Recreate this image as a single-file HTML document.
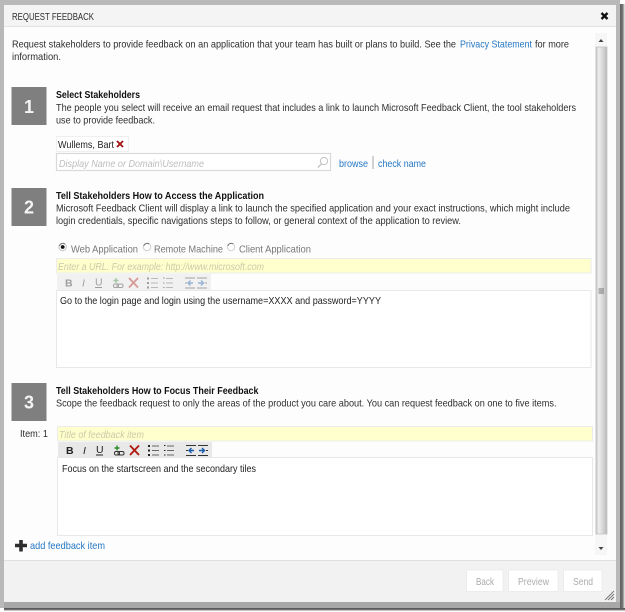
<!DOCTYPE html>
<html><head><meta charset="utf-8"><title>Request Feedback</title>
<style>
html,body{margin:0;padding:0;background:#fff;width:625px;height:612px;overflow:hidden}
svg{display:block;filter:blur(.35px)}
text{font-family:"Liberation Sans",sans-serif;font-size:10.5px;fill:#2e2e2e}
.h{font-weight:bold;fill:#111}
.l{fill:#2477c4}
.g{fill:#777}
.p{font-style:italic;fill:#bdbdbd}
.y{font-style:italic;fill:#cacaa8}
.n{font-size:18px;font-weight:bold;fill:#f4f4f4;text-anchor:middle}
.b{fill:#ababab}
</style></head><body>
<svg width="625" height="612" viewBox="0 0 625 612" xmlns="http://www.w3.org/2000/svg">
<defs>
<linearGradient id="t" x1="0" x2="1" y1="0" y2="0"><stop offset="0" stop-color="#c4c4c4"/><stop offset=".25" stop-color="#eeeeee"/><stop offset=".6" stop-color="#d8d8d8"/><stop offset="1" stop-color="#b8b8b8"/></linearGradient>
<linearGradient id="r" x1="0" x2="1" y1="0" y2="0"><stop offset="0" stop-color="#606060"/><stop offset=".5" stop-color="#707070"/><stop offset="1" stop-color="#f4f4f4"/></linearGradient>
<linearGradient id="s" x1="0" x2="0" y1="0" y2="1"><stop offset="0" stop-color="#555"/><stop offset=".5" stop-color="#666"/><stop offset="1" stop-color="#f4f4f4"/></linearGradient>
</defs>
<rect width="625" height="612" fill="#fff"/>
<rect x="0" y="0" width="620" height="608" fill="#b9b9b9"/>
<rect x="620" y="4" width="5" height="606" fill="url(#r)"/>
<rect x="4" y="608" width="621" height="3" fill="url(#s)"/>
<rect x="4" y="602" width="616" height="6" fill="#a8a8a8"/>
<rect x="4" y="5" width="612" height="597" fill="#fdfdfd"/>
<rect x="4" y="5" width="612" height="21" fill="#f4f4f4"/>
<rect x="4" y="26" width="612" height="1" fill="#e2e2e2"/>
<rect x="4" y="560" width="612" height="42" fill="#f2f2f2"/>
<rect x="4" y="560" width="612" height="1" fill="#e0e0e0"/>

<text x="12" y="20" textLength="82" lengthAdjust="spacingAndGlyphs">REQUEST FEEDBACK</text>
<path d="M601.5 13L607.5 19M607.5 13L601.5 19" stroke="#111" stroke-width="2.4" fill="none"/>

<text x="12" y="47.5" textLength="444" lengthAdjust="spacingAndGlyphs">Request stakeholders to provide feedback on an application that your team has built or plans to build. See the</text>
<text x="460" y="47.5" textLength="72" lengthAdjust="spacingAndGlyphs" class="l">Privacy Statement</text>
<text x="535" y="47.5" textLength="34" lengthAdjust="spacingAndGlyphs">for more</text>
<text x="12" y="60" textLength="49" lengthAdjust="spacingAndGlyphs">information.</text>

<!-- section 1 -->
<rect x="11.5" y="87" width="35" height="38" fill="#7f7f7f"/>
<text x="29" y="113" class="n">1</text>
<text x="56" y="98" textLength="84" lengthAdjust="spacingAndGlyphs" class="h">Select Stakeholders</text>
<text x="56" y="111" textLength="520" lengthAdjust="spacingAndGlyphs">The people you select will receive an email request that includes a link to launch Microsoft Feedback Client, the tool stakeholders</text>
<text x="56" y="123.500" textLength="99" lengthAdjust="spacingAndGlyphs">use to provide feedback.</text>
<rect x="56.500" y="136.500" width="72" height="15" fill="#fff" stroke="#efefef"/>
<text x="58" y="148" textLength="56" lengthAdjust="spacingAndGlyphs" style="fill:#222">Wullems, Bart</text>
<path d="M117 141L123 147M123 141L117 147" stroke="#a31515" stroke-width="1.900" fill="none"/>
<rect x="56.500" y="153.500" width="274" height="17" fill="#fff" stroke="#d9d9d9" stroke-width="1.200"/>
<text x="59" y="167" textLength="145" lengthAdjust="spacingAndGlyphs" class="p">Display Name or Domain\Username</text>
<circle cx="324" cy="161" r="3.600" fill="none" stroke="#c0c0c0" stroke-width="1"/>
<path d="M321.500 163.800L318 167.500" stroke="#c0c0c0" stroke-width="1.300"/>
<text x="339" y="167" textLength="29" lengthAdjust="spacingAndGlyphs" class="l">browse</text>
<rect x="372.500" y="156" width="1" height="13" fill="#a8a8a8"/>
<text x="378" y="167" textLength="48" lengthAdjust="spacingAndGlyphs" class="l">check name</text>

<!-- section 2 -->
<rect x="11.500" y="188" width="35" height="38" fill="#7f7f7f"/>
<text x="29" y="213.500" class="n">2</text>
<text x="56" y="199" textLength="208" lengthAdjust="spacingAndGlyphs" class="h">Tell Stakeholders How to Access the Application</text>
<text x="56" y="211.500" textLength="514" lengthAdjust="spacingAndGlyphs">Microsoft Feedback Client will display a link to launch the specified application and your exact instructions, which might include</text>
<text x="56" y="224" textLength="405" lengthAdjust="spacingAndGlyphs">login credentials, specific navigations steps to follow, or general context of the application to review.</text>

<circle cx="62.700" cy="247" r="3.700" fill="#fff" stroke="#c4c4c4"/>
<circle cx="62.700" cy="247" r="1.900" fill="#111"/>
<path d="M59.500 246A3.600 3.600 0 0 1 65 244" fill="none" stroke="#777"/>
<text x="71" y="252.700" textLength="67" lengthAdjust="spacingAndGlyphs" class="g">Web Application</text>
<circle cx="147" cy="247" r="3.700" fill="#fff" stroke="#d0d0d0"/>
<path d="M143.800 246A3.600 3.600 0 0 1 149.300 244" fill="none" stroke="#777"/>
<text x="154" y="252.700" textLength="69" lengthAdjust="spacingAndGlyphs" class="g">Remote Machine</text>
<circle cx="231" cy="247" r="3.700" fill="#fff" stroke="#d0d0d0"/>
<path d="M227.800 246A3.600 3.600 0 0 1 233.300 244" fill="none" stroke="#777"/>
<text x="239" y="252.700" textLength="72" lengthAdjust="spacingAndGlyphs" class="g">Client Application</text>

<rect x="56.500" y="258.500" width="534.500" height="14.500" fill="#ffffcd" stroke="#ececec"/>
<text x="58" y="270" textLength="206" lengthAdjust="spacingAndGlyphs" class="y">Enter a URL. For example: http://www.microsoft.com</text>

<rect x="57" y="274" width="154" height="16" fill="#f1f1f1"/>
<rect x="56.500" y="290.500" width="534.500" height="77" fill="#fff" stroke="#e8e8e8"/>
<g transform="translate(57,274.500)" opacity=".4">
<text x="8" y="12" style="font-weight:bold;fill:#222">B</text>
<text x="25" y="12" style="font-style:italic;fill:#222">I</text>
<text x="38" y="11" style="fill:#222">U</text>
<path d="M38 13H45" stroke="#222"/>
<path d="M59 3.500V8.500M56.500 6H61.500" stroke="#2c8a2c" stroke-width="1.400"/>
<rect x="56.500" y="9.500" width="5" height="3.500" rx="1.500" fill="none" stroke="#333"/><rect x="60" y="9.500" width="6" height="3.500" rx="1.500" fill="none" stroke="#333"/>
<path d="M72 3.500L81 13M81 3.500L72 13" stroke="#b01c10" stroke-width="1.900"/>
<path d="M90 4H92M90 8.500H92M90 13H92" stroke="#222" stroke-width="2"/><path d="M94 4H101M94 8.500H101M94 13H101" stroke="#666"/>
<path d="M106 3.500H107.500M106 8.500H107.500M106 13H107.500" stroke="#222"/><path d="M109 4H116M109 8.500H116M109 13H116" stroke="#666"/>
<path d="M128 3.500H138M128 13.500H138M128 8.500H130" stroke="#333"/><path d="M136 8.500H131M133.500 6L131 8.500L133.500 11" stroke="#1659a8" stroke-width="1.400" fill="none"/>
<path d="M140 3.500H150M140 13.500H150M148 8.500H150" stroke="#333"/><path d="M141 8.500H146.500M144 6L146.500 8.500L144 11" stroke="#1659a8" stroke-width="1.400" fill="none"/>
</g>
<text x="60" y="304" textLength="321" lengthAdjust="spacingAndGlyphs" style="fill:#222">Go to the login page and login using the username=XXXX and password=YYYY</text>

<!-- section 3 -->
<rect x="11.500" y="383" width="35" height="38" fill="#7f7f7f"/>
<text x="29" y="408.500" class="n">3</text>
<text x="56" y="394" textLength="202.500" lengthAdjust="spacingAndGlyphs" class="h">Tell Stakeholders How to Focus Their Feedback</text>
<text x="56" y="406.500" textLength="500.500" lengthAdjust="spacingAndGlyphs">Scope the feedback request to only the areas of the product you care about. You can request feedback on one to five items.</text>
<text x="20" y="437" textLength="28" lengthAdjust="spacingAndGlyphs">Item: 1</text>
<rect x="57.500" y="426.500" width="535" height="14.500" fill="#ffffcd" stroke="#ececec"/>
<text x="59" y="438" textLength="85" lengthAdjust="spacingAndGlyphs" class="y">Title of feedback item</text>
<rect x="58" y="442" width="154" height="16" fill="#e8e8e8"/>
<rect x="57.500" y="457.500" width="535" height="78" fill="#fff" stroke="#e8e8e8"/>
<g transform="translate(58,442)">
<text x="8" y="12" style="font-weight:bold;fill:#222">B</text>
<text x="25" y="12" style="font-style:italic;fill:#222">I</text>
<text x="38" y="11" style="fill:#222">U</text>
<path d="M38 13H45" stroke="#222"/>
<path d="M59 3.500V8.500M56.500 6H61.500" stroke="#2c8a2c" stroke-width="1.400"/>
<rect x="56.500" y="9.500" width="5" height="3.500" rx="1.500" fill="none" stroke="#333"/><rect x="60" y="9.500" width="6" height="3.500" rx="1.500" fill="none" stroke="#333"/>
<path d="M72 3.500L81 13M81 3.500L72 13" stroke="#b01c10" stroke-width="1.900"/>
<path d="M90 4H92M90 8.500H92M90 13H92" stroke="#222" stroke-width="2"/><path d="M94 4H101M94 8.500H101M94 13H101" stroke="#666"/>
<path d="M106 3.500H107.500M106 8.500H107.500M106 13H107.500" stroke="#222"/><path d="M109 4H116M109 8.500H116M109 13H116" stroke="#666"/>
<path d="M128 3.500H138M128 13.500H138M128 8.500H130" stroke="#333"/><path d="M136 8.500H131M133.500 6L131 8.500L133.500 11" stroke="#1659a8" stroke-width="1.400" fill="none"/>
<path d="M140 3.500H150M140 13.500H150M148 8.500H150" stroke="#333"/><path d="M141 8.500H146.500M144 6L146.500 8.500L144 11" stroke="#1659a8" stroke-width="1.400" fill="none"/>
</g>
<text x="62" y="472" textLength="194" lengthAdjust="spacingAndGlyphs" style="fill:#222">Focus on the startscreen and the secondary tiles</text>
<path d="M21 540V551.500M15 545.500H27" stroke="#2e2e2e" stroke-width="3.600"/>
<text x="30" y="549" textLength="75" lengthAdjust="spacingAndGlyphs" class="l">add feedback item</text>

<!-- scrollbar -->
<rect x="595" y="33" width="12" height="522" fill="#f6f6f6"/>
<rect x="596" y="47" width="11" height="487" fill="url(#t)" stroke="#c2c2c2" stroke-width=".8"/>
<path d="M598.500 42L601 39L603.500 42Z" fill="#444"/>
<path d="M598.500 547L601 550L603.500 547Z" fill="#444"/>
<path d="M598.500 289H604M598.500 291H604M598.500 293H604" stroke="#777"/>

<!-- footer buttons -->
<rect x="466.500" y="570" width="36.500" height="21.500" fill="#fff" stroke="#ececec"/>
<text x="476" y="585" textLength="18" lengthAdjust="spacingAndGlyphs" class="b">Back</text>
<rect x="508.500" y="570" width="49.500" height="21.500" fill="#fff" stroke="#ececec"/>
<text x="518" y="585" textLength="31" lengthAdjust="spacingAndGlyphs" class="b">Preview</text>
<rect x="563.500" y="570" width="38.500" height="21.500" fill="#fff" stroke="#ececec"/>
<text x="573" y="585" textLength="20" lengthAdjust="spacingAndGlyphs" class="b">Send</text>
<path d="M605 600L614 591M608 600L614 594M611 600L614 597" stroke="#777" fill="none"/>
</svg>
</body></html>
